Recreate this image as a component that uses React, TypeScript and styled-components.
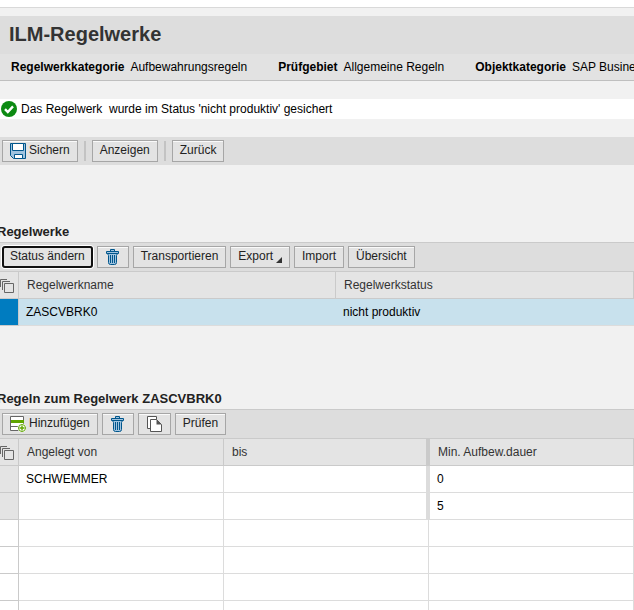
import React from "react";
import styled, { createGlobalStyle } from "styled-components";

const GlobalStyle = createGlobalStyle`
  * { box-sizing: border-box; }
  body {
    margin: 0;
    background: #f1f1f1;
    color: #000;
    font: 12px/16px Arial, "Liberation Sans", sans-serif;
    overflow: hidden;
  }
`;

const Page = styled.main`
  display: flex;
  flex-direction: column;
`;

const TopStrip = styled.div`
  height: 8px;
  margin-bottom: 8px;
  background: #fff;
  border-bottom: 1px solid #d9d9d9;
`;

const PageHeader = styled.header`
  border-bottom: 1px solid #bfbfbf;
  background: #e2e2e2;
`;

const PageTitle = styled.h1`
  margin: 0;
  padding: 4px 9px 6px;
  background: #ddd;
  color: #333;
  font-size: 20px;
  line-height: 28px;
`;

const Facts = styled.dl`
  display: flex;
  gap: 31px;
  margin: 0;
  padding: 5px 11px;
  white-space: nowrap;
  overflow: hidden;
`;

const Fact = styled.div`
  display: flex;
  gap: 6px;
`;

const FactName = styled.dt`
  font-weight: bold;
`;

const FactValue = styled.dd`
  margin: 0;
`;

const Message = styled.p.attrs({ role: "status" })`
  display: flex;
  align-items: center;
  gap: 4px;
  margin: 18px 0;
  padding: 2px 1px;
  background: #fff;
  white-space: pre;
`;

const Toolbar = styled.div<{ $lined?: boolean }>`
  display: flex;
  gap: 4px;
  padding: 3px 2px;
  background: #ddd;
  border-top: ${(p) => (p.$lined ? "1px solid #cacaca" : "none")};
`;

const Button = styled.button<{ $focused?: boolean }>`
  display: flex;
  align-items: center;
  gap: 3px;
  height: 22px;
  padding: 0 7px 2px;
  border: 1px solid #a6a6a6;
  background: #e3e3e3;
  box-shadow: inset 0 1px #fafafa;
  color: #222;
  font: inherit;
  white-space: nowrap;
  ${(p) =>
    p.$focused &&
    `
    border-color: #e3e3e3;
    border-radius: 3px;
    outline: 2px solid #101010;
    outline-offset: -2px;
    box-shadow: 0 0 0 1px #fff;
  `}

  svg {
    flex: none;
    margin-top: 2px;
  }
`;

const IconButton = styled(Button)`
  padding: 0 8px 2px;
`;

const Separator = styled.span`
  width: 2px;
  height: 20px;
  margin: 1px 2px;
  background: #c3c3c3;
`;

const Section = styled.section<{ $first?: boolean }>`
  margin-top: ${(p) => (p.$first ? "58px" : "64px")};
`;

const SectionTitle = styled.h2`
  margin: 0 0 1px -3px;
  color: #222;
  font-size: 13px;
  line-height: 18px;
`;

const Table = styled.table`
  width: 100%;
  table-layout: fixed;
  border-collapse: separate;
  border-spacing: 0;
  border-top: 1px solid #cacaca;
`;

const SelectCol = styled.col`
  width: 19px;
`;

const HalfCol = styled.col`
  width: 50%;
`;

const HeadCell = styled.th<{ $wide?: boolean; $after?: boolean }>`
  height: 27px;
  padding: 0 8px;
  background: #e4e4e4;
  border: 0 solid #cacaca;
  border-right-width: ${(p) => (p.$wide ? "3px" : "1px")};
  border-bottom-width: 1px;
  border-left-width: ${(p) => (p.$after ? "1px" : "0")};
  color: #333;
  font-weight: normal;
  text-align: left;
`;

const SelectHead = styled(HeadCell)`
  padding: 2px 0 0;

  svg {
    display: block;
  }
`;

const Cell = styled.td<{ $selected?: boolean; $wide?: boolean; $after?: boolean }>`
  height: 27px;
  padding: 0 7px;
  background: ${(p) => (p.$selected ? "#c8e1ed" : "#fff")};
  border: 0 solid #dcdcdc;
  border-right-width: ${(p) => (p.$selected ? "0" : p.$wide ? "3px" : "1px")};
  border-bottom-width: 1px;
  border-left-width: ${(p) => (p.$after ? "1px" : "0")};
`;

const MarkCell = styled(Cell)<{ $state: "selected" | "filled" | "empty" }>`
  padding: 0;
  background: ${(p) => ({ selected: "#007cc0", filled: "#e4e4e4", empty: "#fff" })[p.$state]};
  border-color: #cacaca;
`;

const SuccessIcon = () => (
  <svg width="16" height="16" viewBox="0 0 16 16" aria-hidden="true">
    <circle cx="8" cy="8" r="8" fill="#0c8a12" />
    <path d="M4 8.2l2.8 2.8L12 5.4" fill="none" stroke="#fff" strokeWidth="2.4" />
  </svg>
);

const SaveIcon = () => (
  <svg width="16" height="16" viewBox="0 0 16 16" aria-hidden="true">
    <path d="M.5.5h15v15H3.5l-3-3z" fill="#9fc3df" stroke="#00568c" />
    <path d="M2.5.5h11v7h-11z" fill="#fff" stroke="#00568c" />
    <path d="M4.5 11.5h8v4h-8z" fill="#fff" stroke="#00568c" />
  </svg>
);

const TrashIcon = () => (
  <svg width="14" height="16" viewBox="0 0 14 16" aria-hidden="true">
    <path d="M4.5 2.5v-2h4v2M.5 2.5h12v2H.5z" fill="#9fc3df" stroke="#00568c" />
    <path d="M1.5 4.5h10l-1 2v7q0 2-2 2h-4q-2 0-2-2v-7z" fill="#9fc3df" stroke="#00568c" />
    <path d="M4.5 6v8M6.5 6v8M8.5 6v8" stroke="#00568c" />
  </svg>
);

const AddRowIcon = () => (
  <svg width="16" height="16" viewBox="0 0 16 16" aria-hidden="true">
    <path d="M.5.5h13v14H.5z" fill="#fff" stroke="#666" />
    <path d="M0 10.5h14" stroke="#666" />
    <path d="M1 4h13v3H1z" fill="#5fa500" />
    <circle cx="12" cy="12" r="4.5" fill="#fff" />
    <circle cx="12" cy="12" r="3.5" fill="#fff" stroke="#5fa500" />
    <path d="M12 9.5v5M9.5 12h5" stroke="#5fa500" strokeWidth="1.4" />
  </svg>
);

const CopyIcon = () => (
  <svg width="15" height="16" viewBox="0 0 15 16" aria-hidden="true">
    <path d="M.5.5h9v12h-9z" fill="#fff" stroke="#555" />
    <path d="M3.5 3.5h6l5 5v7h-11z" fill="#fff" stroke="#555" />
    <path d="M9.5 3.5v5h5z" fill="#555" />
  </svg>
);

const SelectAllIcon = () => (
  <svg width="14" height="14" viewBox="0 0 14 14" aria-hidden="true">
    <path d="M4.5 4.5h9v9h-9zM2.5 11V2.5H10M.5 8V.5H7" fill="none" stroke="#666" />
  </svg>
);

const MenuMark = () => (
  <svg width="6" height="12" viewBox="0 0 6 12" aria-hidden="true">
    <path d="M6 6v6H0z" fill="#333" />
  </svg>
);

const facts = [
  ["Regelwerkkategorie", "Aufbewahrungsregeln"],
  ["Prüfgebiet", "Allgemeine Regeln"],
  ["Objektkategorie", "SAP Business Suite"],
];

const rules = [
  { from: "SCHWEMMER", to: "", min: "0" },
  { from: "", to: "", min: "5" },
];

const emptyRows = [0, 1, 2, 3];

export default function App() {
  return (
    <Page>
      <GlobalStyle />
      <TopStrip />
      <PageHeader>
        <PageTitle>ILM-Regelwerke</PageTitle>
        <Facts>
          {facts.map(([name, value]) => (
            <Fact key={name}>
              <FactName>{name}</FactName>
              <FactValue>{value}</FactValue>
            </Fact>
          ))}
        </Facts>
      </PageHeader>
      <Message>
        <SuccessIcon />
        {"Das Regelwerk  wurde im Status 'nicht produktiv' gesichert"}
      </Message>
      <Toolbar>
        <Button><SaveIcon />Sichern</Button>
        <Separator />
        <Button>Anzeigen</Button>
        <Separator />
        <Button>Zurück</Button>
      </Toolbar>

      <Section $first>
        <SectionTitle>Regelwerke</SectionTitle>
        <Toolbar $lined>
          <Button $focused>Status ändern</Button>
          <IconButton aria-label="Regelwerk löschen"><TrashIcon /></IconButton>
          <Button>Transportieren</Button>
          <Button>Export<MenuMark /></Button>
          <Button>Import</Button>
          <Button>Übersicht</Button>
        </Toolbar>
        <Table>
          <colgroup><SelectCol /><HalfCol /><col /></colgroup>
          <thead>
            <tr>
              <SelectHead><SelectAllIcon /></SelectHead>
              <HeadCell>Regelwerkname</HeadCell>
              <HeadCell>Regelwerkstatus</HeadCell>
            </tr>
          </thead>
          <tbody>
            <tr>
              <MarkCell $state="selected" />
              <Cell $selected>ZASCVBRK0</Cell>
              <Cell $selected>nicht produktiv</Cell>
            </tr>
          </tbody>
        </Table>
      </Section>

      <Section>
        <SectionTitle>Regeln zum Regelwerk ZASCVBRK0</SectionTitle>
        <Toolbar $lined>
          <Button><AddRowIcon />Hinzufügen</Button>
          <IconButton aria-label="Regel löschen"><TrashIcon /></IconButton>
          <IconButton aria-label="Regel kopieren"><CopyIcon /></IconButton>
          <Button>Prüfen</Button>
        </Toolbar>
        <Table>
          <colgroup><SelectCol /><col /><col /><col /></colgroup>
          <thead>
            <tr>
              <SelectHead><SelectAllIcon /></SelectHead>
              <HeadCell>Angelegt von</HeadCell>
              <HeadCell $wide>bis</HeadCell>
              <HeadCell $after>Min. Aufbew.dauer</HeadCell>
            </tr>
          </thead>
          <tbody>
            {rules.map((rule) => (
              <tr key={rule.min}>
                <MarkCell $state="filled" />
                <Cell>{rule.from}</Cell>
                <Cell $wide>{rule.to}</Cell>
                <Cell $after>{rule.min}</Cell>
              </tr>
            ))}
            {emptyRows.map((row) => (
              <tr key={row}>
                <MarkCell $state="empty" />
                <Cell />
                <Cell />
                <Cell />
              </tr>
            ))}
          </tbody>
        </Table>
      </Section>
    </Page>
  );
}
